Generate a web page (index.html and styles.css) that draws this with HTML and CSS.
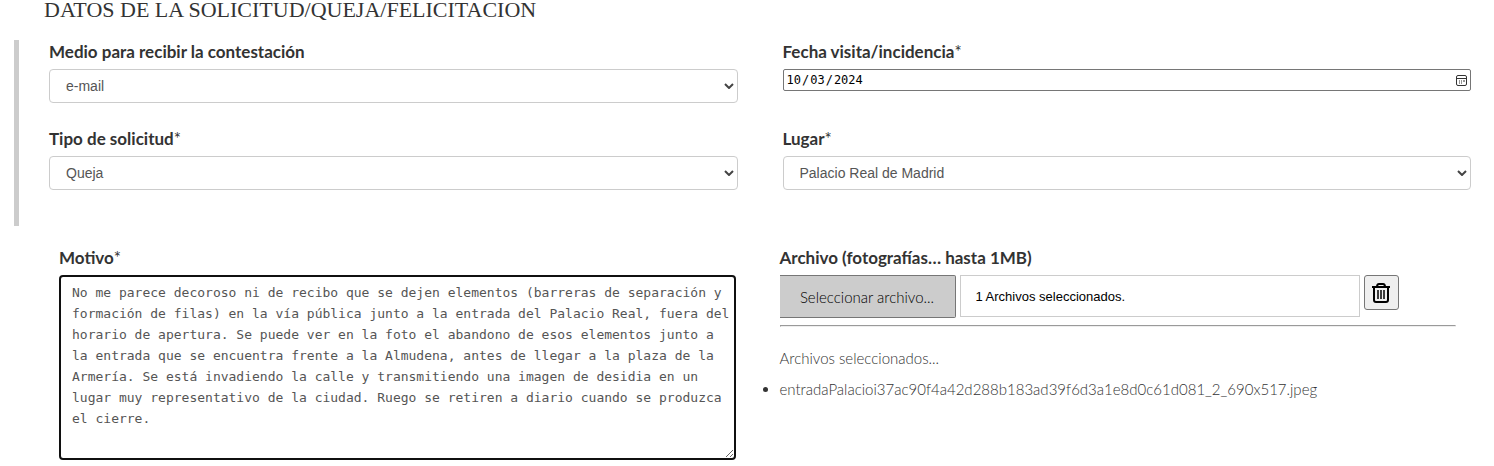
FILE: index.html
```
<!DOCTYPE html>
<html lang="es">
<head>
  <meta charset="UTF-8">
  <meta name="viewport" content="width=device-width,initial-scale=1">
  <title>Datos de la solicitud</title>
  <link rel="stylesheet" href="styles.css">
</head>
<body>
  <form class="form">
    <h2 class="title">DATOS DE LA SOLICITUD/QUEJA/FELICITACION</h2>

    <section class="datos">
      <div class="field">
        <label for="medio">Medio para recibir la contestación</label>
        <div class="select-wrap">
          <select id="medio"><option>e-mail</option></select>
          <svg class="arrow" viewBox="0 0 10 6"><path d="M1 1l4 4 4-4"/></svg>
        </div>
      </div>
      <div class="field">
        <label for="fecha">Fecha visita/incidencia<span class="req">*</span></label>
        <input type="date" id="fecha" class="fecha" value="2024-10-03">
      </div>
      <div class="field">
        <label for="tipo">Tipo de solicitud<span class="req">*</span></label>
        <div class="select-wrap">
          <select id="tipo"><option>Queja</option></select>
          <svg class="arrow" viewBox="0 0 10 6"><path d="M1 1l4 4 4-4"/></svg>
        </div>
      </div>
      <div class="field">
        <label for="lugar">Lugar<span class="req">*</span></label>
        <div class="select-wrap">
          <select id="lugar"><option>Palacio Real de Madrid</option></select>
          <svg class="arrow" viewBox="0 0 10 6"><path d="M1 1l4 4 4-4"/></svg>
        </div>
      </div>
    </section>

    <section class="detalle">
      <div class="field">
        <label for="motivo">Motivo<span class="req">*</span></label>
        <textarea id="motivo" spellcheck="false">No me parece decoroso ni de recibo que se dejen elementos (barreras de separación y formación de filas) en la vía pública junto a la entrada del Palacio Real, fuera del horario de apertura. Se puede ver en la foto el abandono de esos elementos junto a la entrada que se encuentra frente a la Almudena, antes de llegar a la plaza de la Armería. Se está invadiendo la calle y transmitiendo una imagen de desidia en un lugar muy representativo de la ciudad. Ruego se retiren a diario cuando se produzca el cierre.</textarea>
      </div>
      <div class="field">
        <label for="archivo">Archivo (fotografías… hasta 1MB)</label>
        <div class="file-row">
          <button type="button" class="btn-file">Seleccionar archivo...</button>
          <input type="text" id="archivo" class="file-name" value="1 Archivos seleccionados." readonly>
          <button type="button" class="btn-trash" aria-label="Eliminar archivos">
            <svg viewBox="0 0 20 22">
              <path d="M1 5h18M6 5q0-3 2-3h4q2 0 2 3M3 5v13q0 2 2 2h10q2 0 2-2V5"/>
              <path class="bars" d="M7 8v9M10 8v9M13 8v9"/>
            </svg>
          </button>
        </div>
        <hr>
        <p class="selected">Archivos seleccionados...</p>
        <ul class="files">
          <li>entradaPalacioi37ac90f4a42d288b183ad39f6d3a1e8d0c61d081_2_690x517.jpeg</li>
        </ul>
      </div>
    </section>
  </form>

  <script>
    // cursor al final del motivo
    const motivo = document.getElementById('motivo');
    motivo.focus();
    motivo.setSelectionRange(motivo.value.length, motivo.value.length);
  </script>
</body>
</html>
```
FILE: styles.css
```
* { box-sizing:border-box; }
body { margin:0; background:#fff; color:#333; font-family:"Century Gothic", Lato, sans-serif; font-size:15px; }
.title { margin:0 0 20px 44px; font:22px/20px Georgia, "Liberation Serif", serif; }

/* Datos generales */
.datos { display:grid; grid-template-columns:1fr 1fr; gap:24px 45px; margin-left:14px; padding:0 23px 36px 30px; border-left:5px solid #ccc; }
.field { min-width:0; }
label { display:block; margin-bottom:5px; font-size:17px; line-height:24px; font-weight:bold; }
.req { font-weight:normal; }
.select-wrap { position:relative; }
select { display:block; appearance:none; width:100%; height:34px; padding:0 16px; border:1px solid #ccc; border-radius:4px; background:#fff; color:#555; font:14px "Liberation Sans", Arial, sans-serif; }
.arrow { position:absolute; right:4px; top:14px; width:10px; height:6px; fill:none; stroke:#444; stroke-width:2; pointer-events:none; }
.fecha { display:block; width:100%; height:22px; padding:0 2px; border:1px solid #767676; border-radius:2px; background:#fff; color:#000; font:12px "DejaVu Sans Mono", monospace; }
.fecha::-webkit-calendar-picker-indicator { width:13px; height:13px; padding:0; background:url("data:image/svg+xml,%3Csvg xmlns='http://www.w3.org/2000/svg' viewBox='0 0 13 13'%3E%3Crect x='1.5' y='1.5' width='10' height='10' rx='1.5' fill='none' stroke='%23333'/%3E%3Cpath d='M1.5 4.5h10' stroke='%23333'/%3E%3Cpath d='M6 7h1M8 7h2M4 7h1M4 9h1M6 9h1' stroke='%23333'/%3E%3C/svg%3E") center/13px no-repeat; }

/* Motivo y archivos */
.detalle { display:grid; grid-template-columns:1fr 1fr; gap:44px; padding:20px 38px 0 59px; }
textarea { display:block; width:100%; height:185px; padding:5px 2px 5px 11px; border:2px solid #101010; border-radius:4px; outline:0; background:#fff; color:#555; font:13px/21px "DejaVu Sans Mono", monospace; resize:vertical; }
.file-row { display:flex; align-items:flex-start; gap:4px; }
.btn-file { width:176px; height:43px; padding:0; border:1px solid #767676; border-left:0; border-radius:0 2px 2px 0; background:#ccc; color:#000; font:300 15px "Century Gothic", Lato, sans-serif; }
.file-name { flex:0 1 400px; min-width:0; height:42px; padding:0 15px; border:1px solid #ccc; background:#fff; color:#000; font:13px "Liberation Sans", Arial, sans-serif; }
.btn-trash { display:flex; align-items:center; justify-content:center; width:35px; height:35px; padding:0; border:1px solid #767676; border-radius:3px; background:#efefef; }
.btn-trash svg { width:20px; height:22px; fill:none; stroke:#000; stroke-width:2; }
.btn-trash .bars { stroke-width:1.5; }
hr { margin:7px 0 19px; border:1px inset #eee; }
.selected { margin:0 0 7px; line-height:24px; font-weight:300; }
.files { margin:0; padding:0; line-height:24px; font-weight:300; }
```
